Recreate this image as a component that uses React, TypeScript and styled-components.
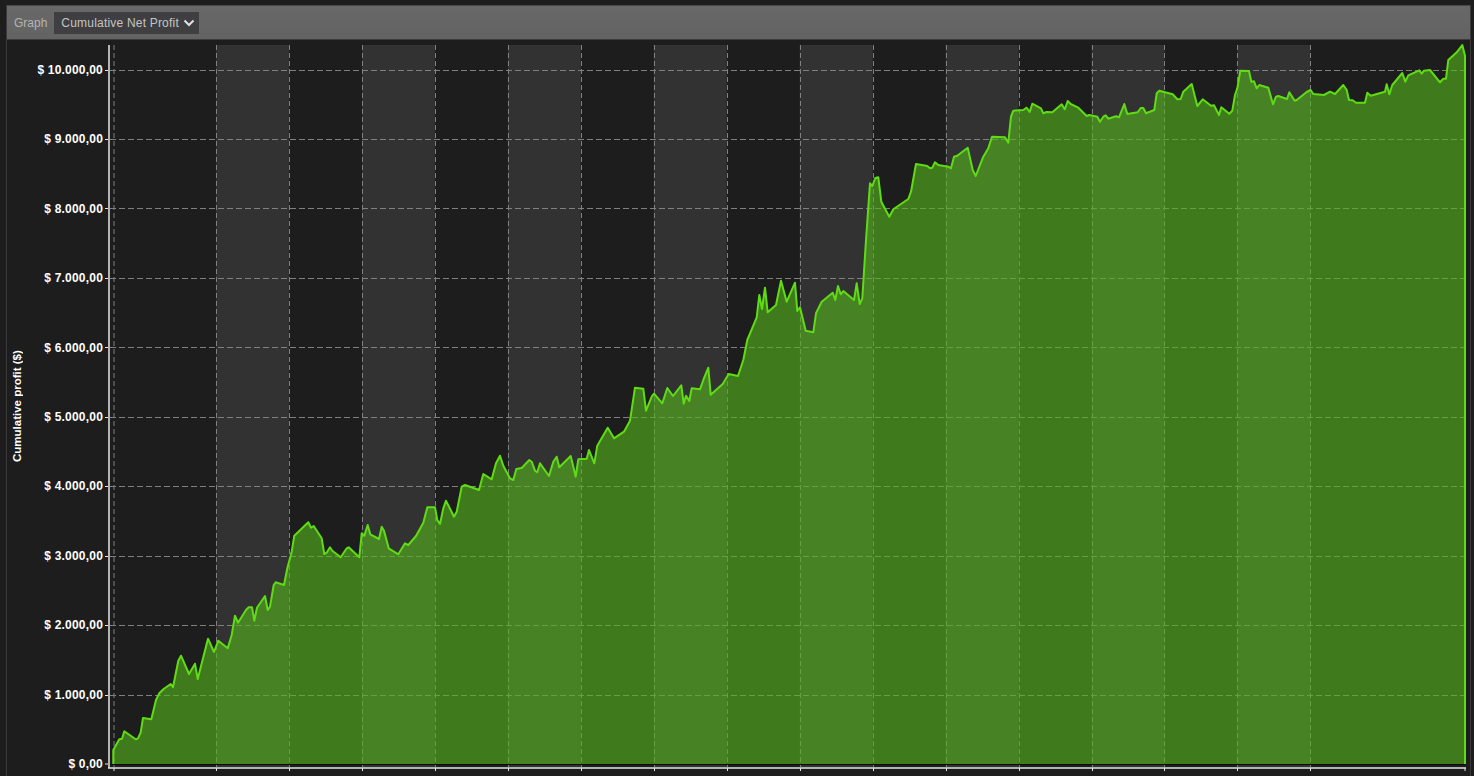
import React from 'react';
import styled, {createGlobalStyle} from 'styled-components';

const GlobalStyle = createGlobalStyle`
  html, body {
    margin: 0;
    height: 100%;
    overflow: hidden;
    background: #1d1d1d;
  }
`;

const Page = styled.div`
  width: 1474px;
  height: 776px;
  padding: 5px 3px 0 6px;
  box-sizing: border-box;
  font-family: "Liberation Sans", Arial, sans-serif;
`;

const Panel = styled.section`
  height: 100%;
  display: flex;
  flex-direction: column;
  border-left: 1px solid #3a3a3a;
  border-right: 1px solid #3a3a3a;
`;

const Toolbar = styled.header`
  flex: none;
  height: 35px;
  box-sizing: border-box;
  display: flex;
  align-items: center;
  gap: 7px;
  padding: 1px 0 0 7px;
  border-top: 1px solid #484848;
  border-bottom: 1px solid #3c3c3c;
  background: linear-gradient(#686868, #636363);
`;

const ToolbarLabel = styled.span`
  font-size: 12px;
  color: #b4b4b4;
`;

const GraphSelect = styled.div`
  width: 145px;
  height: 22px;
  box-sizing: border-box;
  display: flex;
  align-items: center;
  justify-content: space-between;
  padding: 0 4px 0 7px;
  font-size: 12px;
  letter-spacing: 0.2px;
  color: #c4c4c4;
  background: #3f3f42;
`;

const ChartBody = styled.div`
  flex: 1;
  min-height: 0;
  display: flex;
`;

const AxisTitle = styled.div`
  flex: none;
  width: 20px;
  display: flex;
  align-items: center;
  justify-content: center;
  padding-top: 3px;
  padding-bottom: 0;
  box-sizing: border-box;
  writing-mode: vertical-rl;
  transform: rotate(180deg);
  font-size: 11.5px;
  font-weight: 700;
  color: #fff;
`;

const TickColumn = styled.div`
  flex: none;
  width: 76px;
  box-sizing: border-box;
  padding: 23px 0 5px;
  display: flex;
  flex-direction: column;
  justify-content: space-between;
  align-items: flex-end;
`;

const TickLabel = styled.span`
  height: 14px;
  line-height: 14px;
  font-size: 12px;
  font-weight: 700;
  letter-spacing: 0.2px;
  color: #fff;
  white-space: nowrap;
`;

const Plot = styled.svg`
  flex: none;
  display: block;
  width: 1366px;
  height: 736px;
`;

const TICKS = ['$ 10.000,00', '$ 9.000,00', '$ 8.000,00', '$ 7.000,00', '$ 6.000,00', '$ 5.000,00',
  '$ 4.000,00', '$ 3.000,00', '$ 2.000,00', '$ 1.000,00', '$ 0,00'];

const ZERO_Y = 764;
const STEP_Y = 69.44;
const FIRST_X = 216;
const STEP_X = 72.96;
const LAST_X = 1465;

const gridX = [114, ...Array.from({length: 16}, (_, i) => Math.round(FIRST_X + STEP_X * i) + 0.5)];
const gridY = Array.from({length: 10}, (_, i) => Math.round(ZERO_Y - STEP_Y * (i + 1)) + 0.5);
const bands = Array.from({length: 8}, (_, i) => FIRST_X + STEP_X * i * 2);

// traced from the equity curve, in page pixels
const curve = `113.3,764 113.3,750 117.3,742.7 119.3,739.3 122,738.7 124.3,731.3 135.7,739.3 138,738.3 140.7,732.3
143,718 151.3,719.3 156,700 159.3,693.3 163.3,689.3 170.7,684 173,687.3 178.3,660.7 181,655.7 189,674 195,663.7
197.7,679 208,638.7 214,652 218.3,640.7 227.7,648.3 231.7,635 235,615.7 238,622.7 246,610 248.7,607.3 252,607.3
254.3,620.7 257,607.7 265,596 267.7,610 270,606.7 273.7,585 275.7,582.3 284,585 287.3,568.3 291.7,551.7 294.3,535.7
308.3,522.3 311,527.7 313.7,526 321.7,538.3 324.3,554 326.7,552.7 330,547.3 332.3,550.7 340.7,557.3 346.7,548.3
348.7,547.3 359.3,557.3 361.7,533.3 364.3,535.7 367.7,525 370.3,534.3 379,539 381.7,526.7 384,530.7 388.7,548.3
398.3,554.3 405,543.3 408.3,545 416,536 423.3,522.7 427.3,507.3 435,507.3 437.3,520 440,524 443.3,508.3 446,500.7
454,516.7 456.7,511.7 461.7,486.7 465,485 479,490 483.3,474 491.7,479.3 496,463.3 500,455.7 503.3,465.7 510,478.3
513.3,480 516.3,469 521.7,468 529.3,460 531.7,461.7 535,470.7 537.3,472.3 540,463.3 549,476 553.3,461.7 556.7,456.7
559.3,467.3 570.7,456 575.7,476.7 578.3,459.3 586.7,458.7 589,450 594.3,463.3 597.3,445.7 607.7,427.7 614,438.3
624,431.7 630,420.7 635,387.7 643.3,388.7 646,410.7 651.7,396.7 654,393.7 662.3,403.3 667.3,388 673,396 681.3,385.3
683.7,403.7 686,395.7 689.3,401 691.7,388.3 700,389.3 703.3,380 708.3,367.7 710.7,394.7 722.7,384 728.7,374 738,376
743.3,360 747.3,340 756.7,317.3 759.3,295 762,309 765,287.7 767.7,312.3 776,305 781,280.7 786.7,301.7 795,282.7
797.3,311 800,307.3 805.7,330.7 813.3,332.3 816,313.3 821.7,301.7 832.7,292.7 835.3,300 838,286 840.7,294.3 843.3,291
854,300 856.7,283.3 859.7,304 862.3,298.3 866,240 870,183.3 872.3,186 875.3,178 878.3,177.3 881.3,201.7 889.3,216.7
893.3,209.3 908.3,199 911,191.7 916,164 927.3,166 930,168.3 932.3,167.7 935,162.3 938.3,165 948.3,166.7 951,168.3
954,156.7 957.3,155.7 967.7,147.7 972.7,170 975.7,176 983.3,156.7 988.3,148.3 992,136.7 1005,137.3 1008.3,142.7
1011,116.7 1013.3,110.7 1023.3,110 1026.7,107.7 1029.7,112 1032.3,103.7 1041,108.3 1043.3,113.3 1046.7,112 1052.3,112.3
1061.7,104.3 1064.7,109.3 1067.7,101 1070.7,104 1078.3,107.7 1086.7,116 1089.3,115 1097.3,116.7 1100,121.7 1103.3,116.7
1105.7,115.3 1108.3,118.7 1116,116.3 1119,117.3 1124.3,104 1127.3,114 1137.7,112.3 1140.7,108 1143.3,108 1146,113.3
1154.3,110 1156.7,93.3 1159.3,90.7 1165,92.3 1172.7,94.3 1177.3,99.3 1180.7,99 1183.3,91.7 1191.7,84 1197.3,106
1202.7,99.3 1211,105.7 1214,105.3 1219,115 1221.3,107.3 1229.3,113.7 1232.3,110.7 1235,95 1237.3,88.3 1240.3,70.7
1249,71 1251.3,81.7 1254,81.3 1256.7,88.3 1259.3,85 1268.3,87.7 1273,104.3 1276,96.7 1278.3,96 1287,99 1289.3,92.3
1294.7,100.7 1296.7,100 1306.7,92 1310.7,90 1313.3,94 1324,95 1330,91.7 1335,94 1343.3,85 1346.7,90 1349,100
1352.7,100.3 1356,102.7 1365,102.7 1367.3,92.7 1370.7,95.7 1385,91.7 1386.7,84.3 1389.3,94.3 1392.3,85 1402.3,73
1405.3,81.7 1408.3,75.3 1419.3,70.3 1421.7,73.7 1424,70.7 1430,70 1440,82.3 1443.3,78.7 1446,78.7 1448.3,60
1456.7,52.3 1462.3,45 1465,55.7 1465,764`;

const App: React.FunctionComponent = () => {
    const points = curve.replace(/\s+/g, ' ');
    return (
        <Page>
            <GlobalStyle/>
            <Panel>
                <Toolbar>
                    <ToolbarLabel>Graph</ToolbarLabel>
                    <GraphSelect>
                        Cumulative Net Profit
                        <svg width="12" height="8" viewBox="0 0 12 8">
                            <path d="M1.5 1.5 L6 6 L10.5 1.5" fill="none" stroke="#dcdcdc" strokeWidth="2.2"/>
                        </svg>
                    </GraphSelect>
                </Toolbar>
                <ChartBody>
                    <AxisTitle>Cumulative profit ($)</AxisTitle>
                    <TickColumn>
                        {TICKS.map(t => <TickLabel key={t}>{t}</TickLabel>)}
                    </TickColumn>
                    <Plot viewBox="103 40 1366 736">
                        {bands.map(x => <rect key={x} x={x} y={45} width={STEP_X} height={722} fill="#323232"/>)}
                        {gridX.map(x => (
                            <line key={x} x1={x} x2={x} y1={45} y2={767} stroke="#808080" strokeDasharray="5 3"/>
                        ))}
                        {gridY.map(y => (
                            <line key={y} x1={110} x2={LAST_X} y1={y} y2={y} stroke="#808080" strokeDasharray="6 3"/>
                        ))}
                        <polygon points={points} fill="rgb(84, 179, 27)" fillOpacity={0.62}/>
                        <polyline points={points} fill="none" stroke="#5fdc13" strokeWidth={2} strokeLinejoin="round"/>
                        <line x1={110} x2={LAST_X} y1={764.5} y2={764.5} stroke="#0c0c0c"/>
                        <line x1={109} x2={109} y1={45} y2={768} stroke="#b4b4b4" strokeWidth={2}/>
                        <line x1={108} x2={LAST_X + 1} y1={768} y2={768} stroke="#e6e6e6" strokeWidth={1.5}/>
                        {[...gridY, ZERO_Y].map(y => (
                            <line key={y} x1={105} x2={108} y1={y} y2={y} stroke="#e6e6e6"/>
                        ))}
                        {[...gridX, LAST_X].map(x => (
                            <line key={x} x1={x} x2={x} y1={768} y2={771} stroke="#e6e6e6"/>
                        ))}
                    </Plot>
                </ChartBody>
            </Panel>
        </Page>
    );
};

export default App;
